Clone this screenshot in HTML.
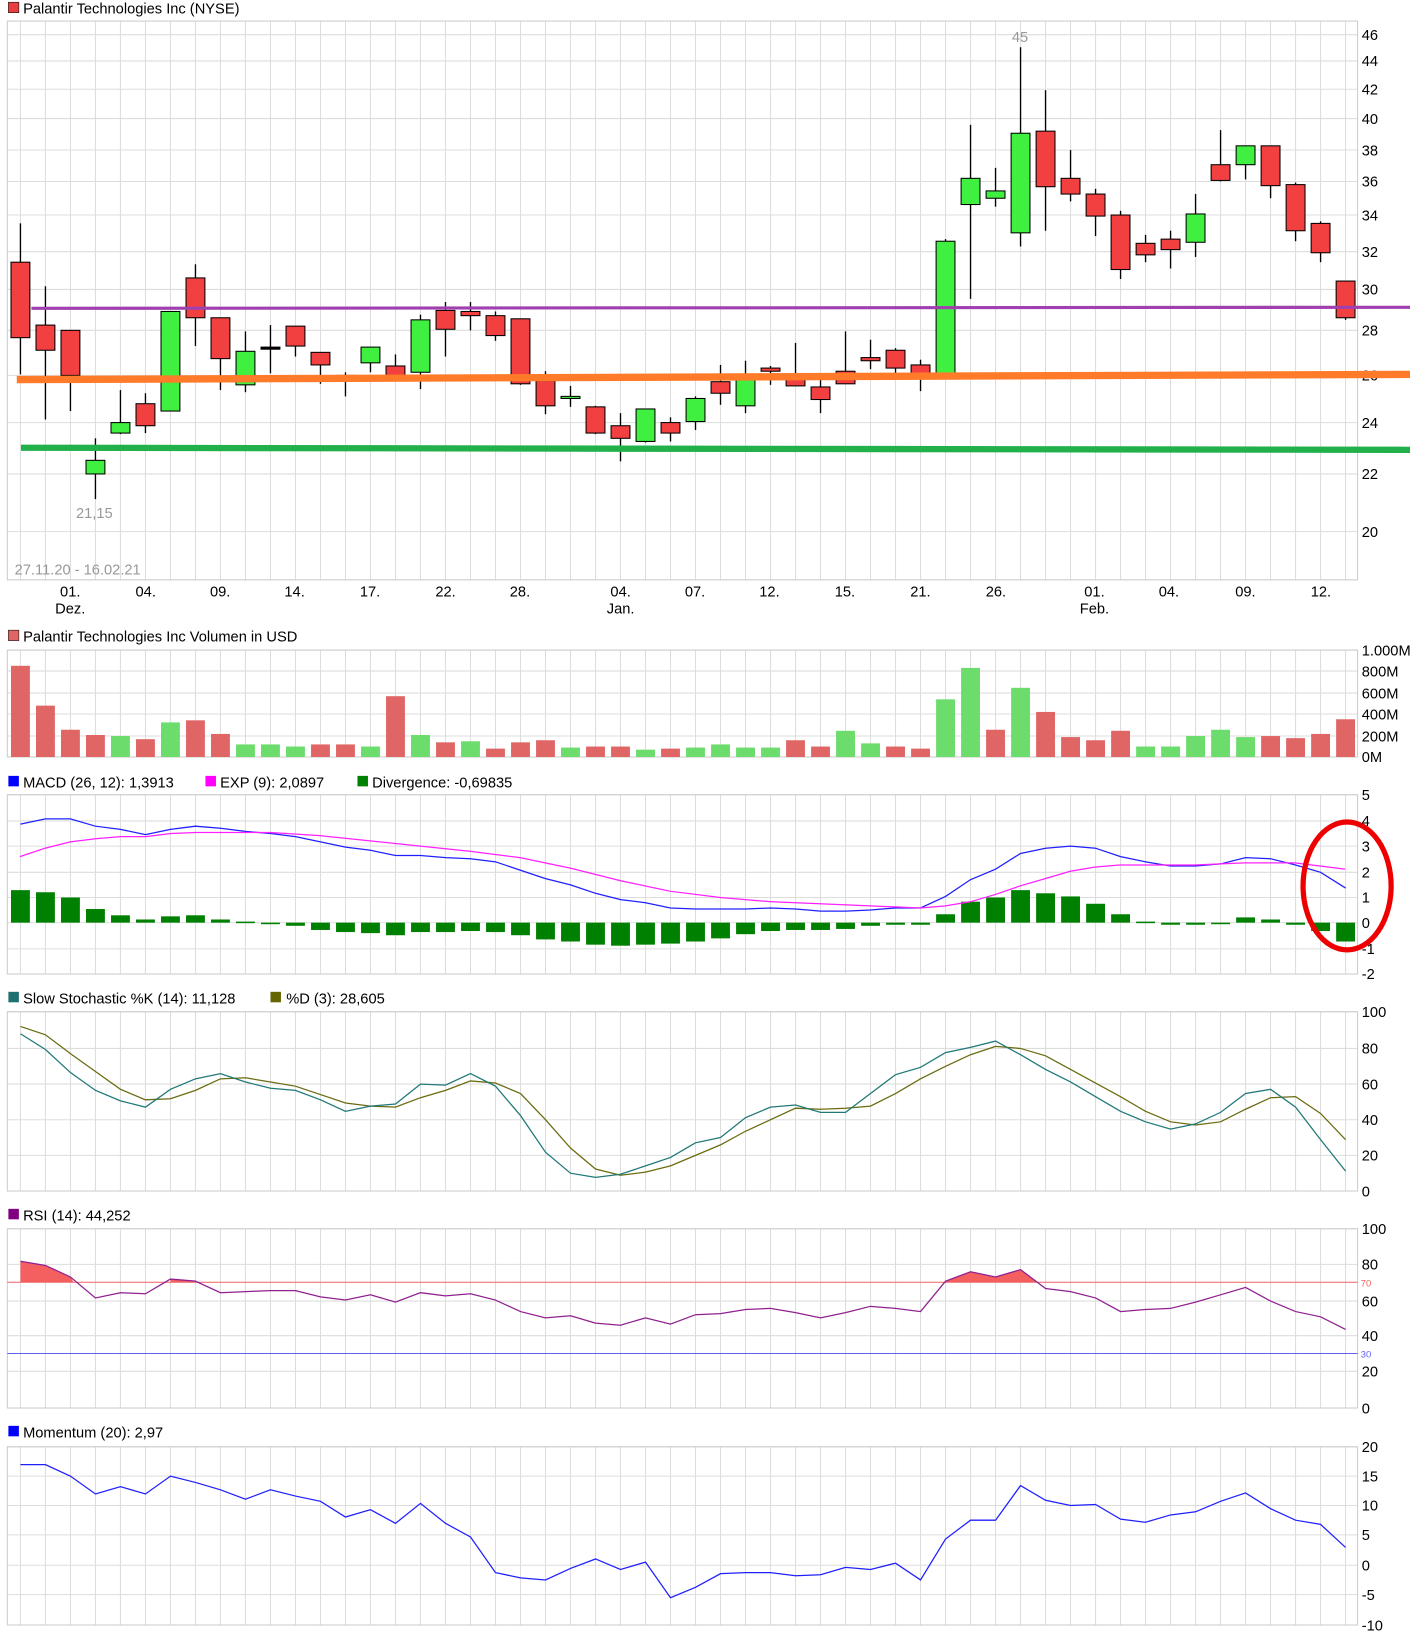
<!DOCTYPE html>
<html><head><meta charset="utf-8"><style>
html,body{margin:0;padding:0;background:#fff;}
svg{display:block;font-family:"Liberation Sans",Arial,sans-serif;}
.t{font-size:14px;fill:#000}
.a{font-size:14px;fill:#000}
</style></head><body>
<svg id="s" width="1410" height="1644" viewBox="0 0 1345 1568" xmlns="http://www.w3.org/2000/svg">
<g id="grid"></g>
<g id="content"></g>
<!-- titles -->
<rect x="8" y="2" width="10" height="10" fill="#e84040" stroke="#000" stroke-width="0.5"/><text class="t" x="22" y="13">Palantir Technologies Inc (NYSE)</text>
<rect x="8" y="601" width="10" height="10" fill="#e06666" stroke="#000" stroke-width="0.5"/><text class="t" x="22" y="612">Palantir Technologies Inc Volumen in USD</text>
<rect x="8" y="740" width="10" height="10" fill="#0000ff"/><text class="t" x="22" y="751">MACD (26, 12): 1,3913</text>
<rect x="196" y="740" width="10" height="10" fill="#ff00ff"/><text class="t" x="210" y="751">EXP (9): 2,0897</text>
<rect x="341" y="740" width="10" height="10" fill="#008000"/><text class="t" x="355" y="751">Divergence: -0,69835</text>
<rect x="8" y="946" width="10" height="10" fill="#207070"/><text class="t" x="22" y="957">Slow Stochastic %K (14): 11,128</text>
<rect x="258" y="946" width="10" height="10" fill="#666600"/><text class="t" x="273" y="957">%D (3): 28,605</text>
<rect x="8" y="1153" width="10" height="10" fill="#800080"/><text class="t" x="22" y="1164">RSI (14): 44,252</text>
<rect x="8" y="1360" width="10" height="10" fill="#0000ff"/><text class="t" x="22" y="1371">Momentum (20): 2,97</text>
<!-- y labels -->
<g class="a">
<text class="a" x="1299" y="38">46</text><text class="a" x="1299" y="63">44</text><text class="a" x="1299" y="90">42</text><text class="a" x="1299" y="118">40</text><text class="a" x="1299" y="148">38</text><text class="a" x="1299" y="178">36</text><text class="a" x="1299" y="210">34</text><text class="a" x="1299" y="245">32</text><text class="a" x="1299" y="281">30</text><text class="a" x="1299" y="320">28</text><text class="a" x="1299" y="363">26</text><text class="a" x="1299" y="408">24</text><text class="a" x="1299" y="457">22</text><text class="a" x="1299" y="512">20</text>
<text class="a" x="1299" y="625">1.000M</text><text class="a" x="1299" y="645">800M</text><text class="a" x="1299" y="666">600M</text><text class="a" x="1299" y="686">400M</text><text class="a" x="1299" y="707">200M</text><text class="a" x="1299" y="727">0M</text>
<text class="a" x="1299" y="763">5</text><text class="a" x="1299" y="788">4</text><text class="a" x="1299" y="812">3</text><text class="a" x="1299" y="837">2</text><text class="a" x="1299" y="861">1</text><text class="a" x="1299" y="885">0</text><text class="a" x="1299" y="910">-1</text><text class="a" x="1299" y="934">-2</text>
<text class="a" x="1299" y="970">100</text><text class="a" x="1299" y="1005">80</text><text class="a" x="1299" y="1039">60</text><text class="a" x="1299" y="1073">40</text><text class="a" x="1299" y="1107">20</text><text class="a" x="1299" y="1141">0</text>
<text class="a" x="1299" y="1177">100</text><text class="a" x="1299" y="1211">80</text><text class="a" x="1299" y="1246">60</text><text class="a" x="1299" y="1279">40</text><text class="a" x="1299" y="1313">20</text><text class="a" x="1299" y="1348">0</text>
<text x="1298" y="1227" style="font-size:9px;fill:#f06060">70</text><text x="1298" y="1295" style="font-size:9px;fill:#6060f0">30</text>
<text class="a" x="1299" y="1385">20</text><text class="a" x="1299" y="1413">15</text><text class="a" x="1299" y="1441">10</text><text class="a" x="1299" y="1469">5</text><text class="a" x="1299" y="1498">0</text><text class="a" x="1299" y="1526">-5</text><text class="a" x="1299" y="1555">-10</text>
</g>
<!-- x labels -->
<g text-anchor="middle">
<text class="a" x="67" y="569">01.</text><text class="a" x="67" y="585">Dez.</text>
<text class="a" x="139" y="569">04.</text><text class="a" x="210" y="569">09.</text><text class="a" x="281" y="569">14.</text><text class="a" x="353" y="569">17.</text><text class="a" x="425" y="569">22.</text><text class="a" x="496" y="569">28.</text>
<text class="a" x="592" y="569">04.</text><text class="a" x="592" y="585">Jan.</text>
<text class="a" x="663" y="569">07.</text><text class="a" x="734" y="569">12.</text><text class="a" x="806" y="569">15.</text><text class="a" x="878" y="569">21.</text><text class="a" x="950" y="569">26.</text>
<text class="a" x="1044" y="569">01.</text><text class="a" x="1044" y="585">Feb.</text>
<text class="a" x="1115" y="569">04.</text><text class="a" x="1188" y="569">09.</text><text class="a" x="1260" y="569">12.</text>
<text x="973" y="40" style="font-size:14px;fill:#999">45</text>
<text x="90" y="494" style="font-size:14px;fill:#999">21,15</text>
</g>
<text x="14" y="548" style="font-size:14px;fill:#999">27.11.20 - 16.02.21</text>
<g id="top"></g>
</svg>
<script>
var NS="http://www.w3.org/2000/svg";
function el(p,n,a){var e=document.createElementNS(NS,n);for(var k in a)e.setAttribute(k,a[k]);document.getElementById(p).appendChild(e);return e;}
function X(i){return 19.5+23.85*i;}
var panels=[[20,553,[33,58,85,113,143,173,205,240,276,315,358,403,452,507]],[620,722,[620,640,661,681,702,722]],[758,929,[758,783,807,832,856,880,905,929]],[965,1136,[965,1000,1034,1068,1102,1136]],[1172,1343,[1172,1206,1241,1274,1308,1343]],[1380,1550,[1380,1408,1436,1464,1493,1521,1550]]];
panels.forEach(function(p){
 for(var i=0;i<54;i++)el("grid","line",{x1:X(i),x2:X(i),y1:p[0],y2:p[1],stroke:"#ddd","stroke-width":1});
 p[2].forEach(function(y){el("grid","line",{x1:7,x2:1295,y1:y,y2:y,stroke:"#ddd","stroke-width":1});});
 el("grid","rect",{x:7,y:p[0],width:1288,height:p[1]-p[0],fill:"none",stroke:"#ccc","stroke-width":1});
});
// candles [bodyTop,bodyBot,high,low,color]
var C=[[250,322,213,357,'r'],[310,334,273,400,'r'],[315,358,315,392,'r'],[439,452,418,476,'g'],[403,413,372,414,'g'],[385,406,375,413,'r'],[297,392,297,392,'g'],[265,303,252,330,'r'],[303,342,303,372,'r'],[335,367,316,374,'g'],[331,333,310,356,'k'],[311,330,311,340,'r'],[336,348,336,366,'r'],[358,362,355,378,'r'],[331,346,331,355,'g'],[349,360,338,362,'r'],[305,355,300,371,'g'],[296,314,288,340,'r'],[297,301,288,315,'r'],[301,320,297,325,'r'],[304,366,304,367,'r'],[363,387,354,395,'r'],[378,380,368,388,'g'],[388,413,387,414,'r'],[406,418,394,440,'r'],[390,421,390,422,'g'],[403,413,398,421,'r'],[380,402,378,410,'g'],[364,375,348,386,'r'],[360,387,344,394,'g'],[351,354,349,367,'r'],[358,368,327,368,'r'],[369,381,359,394,'r'],[354,366,316,366,'r'],[341,344,324,352,'r'],[334,351,332,358,'r'],[348,357,343,373,'r'],[230,357,228,357,'g'],[170,195,119,285,'g'],[182,189,160,197,'g'],[127,222,45,235,'g'],[125,178,86,220,'r'],[170,185,143,192,'r'],[185,206,180,225,'r'],[205,257,201,266,'r'],[232,243,224,250,'r'],[228,238,220,256,'r'],[204,231,185,245,'g'],[157,172,124,173,'r'],[139,157,139,171,'g'],[139,177,139,189,'r'],[176,220,174,230,'r'],[213,241,211,250,'r'],[268,303,268,305,'r']];
C.forEach(function(c,i){var x=X(i);
 el("content","line",{x1:x,x2:x,y1:c[2],y2:c[3],stroke:"#000","stroke-width":1.3});
 el("content","rect",{x:x-9,y:c[0],width:18,height:Math.max(1,c[1]-c[0]),fill:c[4]=='r'?'#f24040':c[4]=='g'?'#40f040':'#000',stroke:"#000","stroke-width":1});
});
el("top","line",{x1:30,x2:1345,y1:294,y2:293,stroke:"#a040b0","stroke-width":3});
el("top","line",{x1:16,x2:1345,y1:362,y2:357,stroke:"#ff7b2a","stroke-width":7});
el("top","line",{x1:20,x2:1345,y1:427,y2:429,stroke:"#22b04a","stroke-width":6});
// volume
var V=[[635,'r'],[673,'r'],[696,'r'],[701,'r'],[702,'g'],[705,'r'],[689,'g'],[687,'r'],[700,'r'],[710,'g'],[710,'g'],[712,'g'],[710,'r'],[710,'r'],[712,'g'],[664,'r'],[701,'g'],[708,'r'],[707,'g'],[714,'r'],[708,'r'],[706,'r'],[713,'g'],[712,'r'],[712,'r'],[715,'g'],[714,'r'],[713,'g'],[710,'g'],[713,'g'],[713,'g'],[706,'r'],[712,'r'],[697,'g'],[709,'g'],[712,'r'],[714,'r'],[667,'g'],[637,'g'],[696,'r'],[656,'g'],[679,'r'],[703,'r'],[706,'r'],[697,'r'],[712,'g'],[712,'g'],[702,'g'],[696,'g'],[703,'g'],[702,'r'],[704,'r'],[700,'r'],[686,'r']];
V.forEach(function(v,i){el("content","rect",{x:X(i)-9,y:v[0],width:18,height:722-v[0],fill:v[1]=='r'?'#e06666':'#6cdc6c'});});
// divergence
var D=[849,851,856,867,873,877,874,873,877,879,881,883,887,889,890,892,889,889,888,889,892,896,898,901,902,901,900,898,895,891,888,887,887,886,883,882,882,872,860,856,849,852,855,862,872,879,882,882,880,875,877,882,888,898];
D.forEach(function(d,i){var y0=Math.min(d,880),h=Math.max(1.5,Math.abs(d-880));el("content","rect",{x:X(i)-9,y:y0,width:18,height:h,fill:"#008000"});});
function line(pts,col,w){el("content","polyline",{points:pts.map(function(p){return p.join(",")}).join(" "),fill:"none",stroke:col,"stroke-width":w||1.2});}
function idx(arr){return arr.map(function(y,i){return [X(i),y];});}
line(idx([786,781,781,788,791,796,791,788,790,793,795,798,803,808,811,816,816,818,819,822,830,838,844,852,858,861,866,867,867,867,866,867,869,869,868,866,866,855,839,829,814,809,807,809,817,822,826,826,824,818,819,825,832,847]),"#2020ff");
line([[19,817],[43,809],[67,803],[91,800],[115,798],[139,798],[163,795],[187,794],[210,794],[258,794],[305,797],[353,802],[401,807],[449,812],[496,818],[544,828],[592,840],[639,850],[687,856],[734,860],[782,862],[830,864],[878,866],[902,864],[926,860],[950,853],[973,845],[997,838],[1021,831],[1044,827],[1068,825],[1092,825],[1139,825],[1187,823],[1235,823],[1259,826],[1283,829]],"#ff20ff");
el("content","ellipse",{cx:1285,cy:845,rx:42,ry:61,fill:"none",stroke:"#ee0000","stroke-width":5});
line(idx([979,987,1005,1022,1039,1049,1048,1040,1029,1028,1032,1036,1044,1052,1055,1056,1047,1040,1031,1033,1043,1068,1095,1115,1121,1118,1112,1102,1092,1079,1068,1057,1058,1057,1055,1043,1029,1017,1006,998,1000,1007,1020,1033,1046,1060,1070,1073,1070,1058,1047,1046,1062,1087]),"#6b6b10");
line(idx([986,1001,1023,1040,1050,1056,1039,1029,1024,1032,1038,1040,1049,1060,1055,1053,1034,1035,1024,1036,1064,1099,1119,1123,1120,1112,1104,1090,1085,1066,1056,1054,1061,1061,1043,1025,1018,1004,999,993,1006,1020,1032,1046,1060,1070,1077,1072,1061,1043,1039,1056,1087,1117]),"#207878");
// RSI
var R=[1203,1207,1218,1238,1233,1234,1220,1222,1233,1232,1231,1231,1237,1240,1235,1242,1233,1236,1234,1240,1251,1257,1255,1262,1264,1257,1263,1254,1253,1249,1248,1252,1257,1252,1246,1248,1251,1222,1213,1218,1211,1229,1232,1238,1251,1249,1248,1242,1235,1228,1241,1251,1256,1268];
el("content","polygon",{points:X(0)+",1223 "+X(0)+",1203 "+X(1)+",1207 "+X(2)+",1218 "+(X(2)+3)+",1223",fill:"#f46060"});
el("content","polygon",{points:X(6)+",1223 "+X(6)+",1220 "+X(7)+",1222 "+(X(7)+2)+",1223",fill:"#f46060"});
el("content","polygon",{points:X(37)+",1223 "+X(37)+",1222 "+X(38)+",1213 "+X(39)+",1218 "+X(40)+",1211 "+(X(40)+16)+",1223",fill:"#f46060"});
el("content","line",{x1:7,x2:1295,y1:1223,y2:1223,stroke:"#f06060","stroke-width":1});
el("content","line",{x1:7,x2:1295,y1:1291,y2:1291,stroke:"#6060f0","stroke-width":1});
line(idx(R),"#902090");
line(idx([1397,1397,1408,1425,1418,1425,1408,1414,1421,1430,1421,1427,1432,1447,1440,1453,1434,1453,1466,1500,1505,1507,1496,1487,1497,1490,1524,1514,1501,1500,1500,1503,1502,1495,1497,1491,1507,1468,1450,1450,1417,1431,1436,1435,1449,1452,1445,1442,1432,1424,1439,1450,1454,1476]),"#2020ff");
</script>
</body></html>
